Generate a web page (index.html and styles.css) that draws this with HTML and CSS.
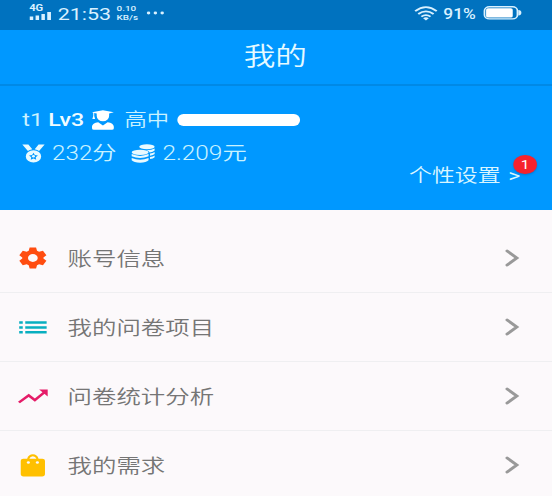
FILE: index.html
```html
<!DOCTYPE html>
<html lang="zh-CN">
<head>
<meta charset="utf-8">
<title>我的</title>
<link rel="stylesheet" href="styles.css">
</head>
<body>
<div class="screen">
  <div class="status">
    <div class="signal">
      <span class="net">4G</span>
      <svg width="18" height="8" viewBox="0 0 18 8" fill="currentColor"><path d="M0 4.500h2.800V8H0zM4.700 3.500h2.800V8H4.700zM9.400 2h2.800v6H9.400zM14.100 0h3v8h-3z"/></svg>
    </div>
    <span class="time">21:53</span>
    <span class="speed"><span>0.10</span><span>KB/s</span></span>
    <svg class="dots" width="15" height="4" viewBox="0 0 15 4" fill="currentColor"><circle cx="1.8" cy="2" r="1.4"/><circle cx="7.3" cy="2" r="1.4"/><circle cx="12.8" cy="2" r="1.4"/></svg>
    <svg class="wifi" width="19" height="15" viewBox="0 0 19 15" fill="none" stroke="currentColor" stroke-width="1.7"><path d="M.8 5.2q8.7-8 17.4 0M3.3 8q6.2-5.4 12.4 0M5.8 10.7q3.7-3 7.4 0"/><path d="M7.2 12.2q2.3-1.8 4.6 0L9.5 14.6z" fill="currentColor" stroke="none"/></svg>
    <span class="percent">91%</span>
    <svg class="battery" width="31" height="14" viewBox="0 0 31 14"><rect x=".7" y=".7" width="26.6" height="12.2" rx="4" fill="none" stroke="currentColor" stroke-width="1.4"/><rect x="2" y="2.200" width="21.500" height="9.200" rx="1.500" fill="#fff"/><path d="M28 4q2.500.3 2.500 2.800T28 9.600z" fill="currentColor"/></svg>
  </div>
  <header class="title">我的</header>
  <section class="profile">
    <div class="line">
      <span class="user">t1</span>
      <span class="level">Lv3</span>
      <svg class="grad" width="18" height="20" viewBox="0 0 18 20" fill="currentColor"><path d="M.2 2.2L9 .2l8.800 2L14 3.400V6a5 5.200 0 0 1-10 0V3.400l-2-.5v3l.7 3.200H.5L1.200 6V2.700zM5.200 12.200L9 15.500l3.800-3.300c3 .2 5 2.100 5 4.800v1.200q0 1.600-1.600 1.600H1.800q-1.600 0-1.600-1.600V17c0-2.700 2-4.600 5-4.800z"/></svg>
      <span class="school">高中</span>
      <span class="mask"></span>
    </div>
    <div class="line second">
      <svg class="medal" width="18" height="19" viewBox="0 0 18 19" fill="currentColor"><path d="M0 .4h4.900L8 5.300Q5.800 5.700 4.500 7.100zM18 .4h-4.900L10 5.300q2.200.4 3.500 1.800z"/><path fill-rule="evenodd" d="M9 6.200a6.200 6.200 0 1 1 0 12.400A6.200 6.200 0 0 1 9 6.200zm0 2.600l-1.100 2.300-2.500.3 1.800 1.800-.4 2.500L9 14.500l2.200 1.200-.4-2.500 1.800-1.800-2.500-.3z"/><circle cx="9" cy="12.300" r="1.200"/></svg>
      <span class="score">232分</span>
      <svg class="coins" width="19" height="19" viewBox="0 0 19 19" fill="currentColor"><ellipse cx="12.500" cy="2.800" rx="6.200" ry="2.500"/><path d="M12 6.200q4.500 0 6.700-1.700v2q-1.200 1.500-4 1.900Q14 6.800 12 6.200zM15 9.500q2.500-.4 3.700-1.500v2q-1.200 1.300-3.700 1.800zM15 13q2.500-.4 3.700-1.500v1.800q-1.200 1.400-3.700 1.800z"/><ellipse cx="7" cy="8.300" rx="6.800" ry="2.600"/><path d="M.2 10.100q6.800 3.600 13.600 0v2.200q-6.800 3.600-13.600 0zM.2 13.900q6.800 3.600 13.600 0v2.400q-1.800 2.400-6.800 2.400T.2 16.300z"/></svg>
      <span class="money">2.209元</span>
    </div>
    <div class="settings">个性设置<span class="more">&gt;<span class="badge">1</span></span></div>
  </section>
  <nav class="list">
    <div class="item">
      <svg class="icon gear" viewBox="0 0 24 24"><path fill="currentColor" fill-rule="evenodd" d="M9.300 1h5.400l.8 3.400 1.700 1 3.300-1 2.900 4.700-2.500 2.300v1.200l2.500 2.300-2.900 4.700-3.300-1-1.700 1-.8 3.400H9.300l-.8-3.400-1.700-1-3.300 1L.6 14.900l2.500-2.300v-1.200L.6 9.100l2.900-4.700 3.300 1 1.700-1zM12 7.900a4.100 4.100 0 1 0 0 8.200 4.100 4.100 0 0 0 0-8.200z"/></svg>
      <span class="label">账号信息</span>
      <svg class="arrow" viewBox="0 0 12 18"><path d="M2 2l7.800 7-7.800 7"/></svg>
    </div>
    <div class="item">
      <svg class="icon lines" viewBox="0 0 24 24"><path fill="currentColor" d="M.5 6h3v2.700h-3zM5.600 6h18v2.700h-18zM.5 11.200h3v2.700h-3zM5.600 11.200h18v2.700h-18zM.5 16.200h3v2.700h-3zM5.600 16.200h18v2.700h-18z"/></svg>
      <span class="label">我的问卷项目</span>
      <svg class="arrow" viewBox="0 0 12 18"><path d="M2 2l7.800 7-7.800 7"/></svg>
    </div>
    <div class="item">
      <svg class="icon trend" viewBox="0 0 24 24"><path fill="none" stroke="currentColor" stroke-width="2.400" d="M.3 18.800l8.200-7.500 5.200 5 7.800-8"/><path fill="currentColor" d="M17.300 5.300h7.200v7.200z"/></svg>
      <span class="label">问卷统计分析</span>
      <svg class="arrow" viewBox="0 0 12 18"><path d="M2 2l7.800 7-7.800 7"/></svg>
    </div>
    <div class="item">
      <svg class="icon bag" viewBox="0 0 24 24"><path fill="currentColor" fill-rule="evenodd" d="M4 5.500h3.200C7.800 2.500 9.600.8 12 .8s4.200 1.700 4.800 4.700H20q2.200 0 2.200 2v14q0 2.400-2.400 2.400H4.200q-2.400 0-2.400-2.400v-14q0-2 2.200-2zM9 5.500h6q-.8-2.700-3-2.700T9 5.500z"/><g fill="#fcf9fb"><circle cx="8.200" cy="9.300" r="1.300"/><circle cx="15.800" cy="9.300" r="1.300"/></g></svg>
      <span class="label">我的需求</span>
      <svg class="arrow" viewBox="0 0 12 18"><path d="M2 2l7.800 7-7.800 7"/></svg>
    </div>
  </nav>
</div>
</body>
</html>
```
FILE: styles.css
```css
* { box-sizing: border-box; }
body { margin: 0; overflow: hidden; background: #fcf9fb; }
svg { display: block; flex: none; overflow: visible; }

/* The interface uses horizontally expanded type and icons. */
.screen {
  width: 446px;
  height: 496px;
  overflow: hidden;
  transform: scaleX(1.240);
  transform-origin: 0 0;
  font-family: Roboto, "Noto Sans CJK SC", sans-serif;
  font-weight: 350;
  white-space: nowrap;
}

.status {
  display: flex;
  align-items: center;
  height: 30px;
  padding: 0 25.500px 4px 23.500px;
  background: #0072bf;
  color: #d9f1ff;
  font-weight: 400;
}
.signal { width: 19px; margin-top: -3px; }
.net { display: block; margin-bottom: 0; font: 700 9px/8px Roboto, sans-serif; }
.time { width: 43px; margin-left: 4px; padding-top: 1px; font-size: 17.300px; font-weight: 400; line-height: 20px; }
.speed { display: flex; flex-direction: column; width: 19px; margin-left: 4.500px; }
.speed span { font-size: 8px; font-weight: 500; line-height: 9px; }
.dots { margin-left: 4.500px; }
.wifi { margin-left: auto; }
.percent { width: 29px; margin: 1px 3px 0 5px; font-size: 14px; font-weight: 500; }
.battery { width: 31px; }

.title {
  height: 56px;
  padding-right: 2px;
  background: #0098ff;
  border-bottom: 2px solid #0089e6;
  color: #e6faff;
  font-size: 25.500px;
  line-height: 53px;
  text-align: center;
}

.profile {
  height: 124px;
  padding: 22px 26.500px 0 18px;
  background: #0098ff;
  color: #c9f2ff;
  font-size: 19px;
}
.line { display: flex; align-items: center; height: 24px; line-height: 22px; padding-bottom: 1px; }
.second { margin-top: 10px; }
.level { margin-left: 6px; color: #f0fcff; font-size: 18.700px; font-weight: 500; }
.user { font-weight: 400; width: 15px; }
.grad { margin-left: 6.500px; color: #fff; }
.school { margin-left: 8px; font-size: 18px; }
.mask { width: 99px; height: 12px; margin-left: 7px; border-radius: 5px / 6px; background: #fff; }
.medal { color: #e9faff; }
.score { margin-left: 6px; font-size: 19.500px; }
.money { font-size: 19.700px; }
.coins { margin: 0 6px 0 12px; color: #e9faff; }
.settings {
  display: flex;
  justify-content: flex-end;
  height: 24px;
  margin-top: -2px;
  font-size: 18.500px;
  line-height: 24px;
  color: #daf6ff;
}
.more { position: relative; margin-left: 6px; font-weight: 400; }
.badge {
  position: absolute;
  left: 4.500px;
  top: -9px;
  width: 18.500px;
  height: 19px;
  border-radius: 50%;
  background: #f6222d;
  box-shadow: 0 1px 2px #0055aa80;
  color: #fff;
  font-size: 12.500px;
  line-height: 19px;
  text-align: center;
}

.list { padding-top: 14px; background: #fcf9fb; }
.item {
  display: flex;
  align-items: center;
  height: 69px;
  padding: 0 27px 0 15px;
  border-bottom: 1px solid #efeff1;
}
.icon { width: 23px; height: 24px; }
.gear { color: #ff4d10; }
.lines { color: #08afc0; }
.trend { color: #e51c68; }
.bag { color: #ffc000; }
.label { flex: 1; margin: -2px 0 0 16.500px; font-size: 19.700px; color: #757575; }
.arrow { width: 12px; height: 18px; fill: none; stroke: #999; stroke-width: 2.700; stroke-linecap: round; }
```
